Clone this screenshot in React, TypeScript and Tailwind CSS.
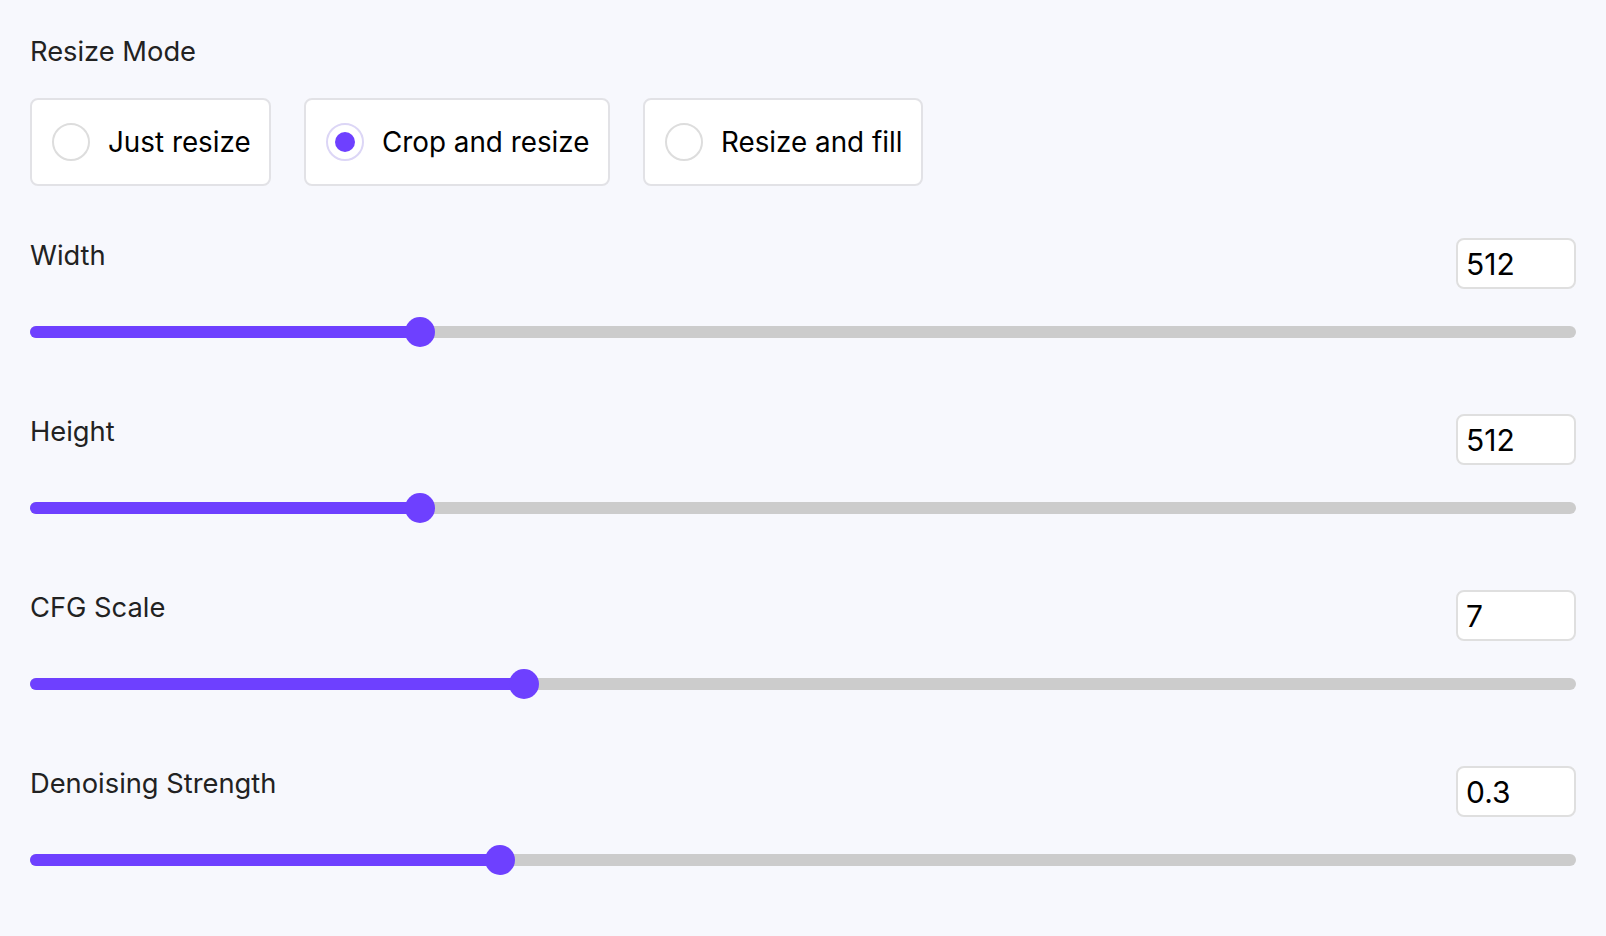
import React from "react";

function Radio({ selected }: { selected: boolean }) {
  return selected ? (
    <span className="flex h-[38px] w-[38px] shrink-0 items-center justify-center rounded-full border-2 border-[#dcd6f6] bg-white">
      <span className="h-[20px] w-[20px] rounded-full bg-[#6e40ff]" />
    </span>
  ) : (
    <span className="h-[38px] w-[38px] shrink-0 rounded-full border-2 border-[#dddddd] bg-white" />
  );
}

function Slider({ label, value, ratio }: { label: string; value: string; ratio: number }) {
  return (
    <div className="flex flex-col">
      <div className="flex items-start justify-between">
        <span className="mt-[2px] text-[27.3px] leading-[32px] text-[#222222]">{label}</span>
        <input
          readOnly
          value={value}
          className="h-[51px] w-[120px] rounded-[8px] border-2 border-[#dfdfdf] bg-white px-[8px] text-[30px] text-black outline-none"
          style={{ fontFamily: "Inter, 'Noto Sans', sans-serif" }}
        />
      </div>
      <div className="relative mt-[28px] flex h-[30px] items-center">
        <div className="h-[12px] w-full rounded-full bg-[#cccccc]" />
        <div
          className="absolute left-0 top-[9px] h-[12px] rounded-l-full bg-[#6e40ff]"
          style={{ width: `calc(15px + (100% - 30px) * ${ratio})` }}
        />
        <div
          className="absolute top-0 h-[30px] w-[30px] rounded-full bg-[#6e40ff]"
          style={{ left: `calc((100% - 30px) * ${ratio})` }}
        />
      </div>
    </div>
  );
}

export default function App() {
  const modes = [
    { label: "Just resize", selected: false, w: "w-[241px]" },
    { label: "Crop and resize", selected: true, w: "w-[306px]" },
    { label: "Resize and fill", selected: false, w: "w-[280px]" },
  ];
  const sliders = [
    { label: "Width", value: "512", ratio: 0.2474 },
    { label: "Height", value: "512", ratio: 0.2474 },
    { label: "CFG Scale", value: "7", ratio: 6 / 19 },
    { label: "Denoising Strength", value: "0.3", ratio: 0.3 },
  ];
  return (
    <div
      className="min-h-screen bg-[#f7f8fd] px-[30px] pt-[36px]"
      style={{ fontFamily: "Inter, 'Noto Sans', sans-serif" }}
    >
      <div className="text-[27.3px] leading-[32px] text-[#222222]">Resize Mode</div>
      <div className="mt-[30px] flex gap-[33px]">
        {modes.map((m) => (
          <div
            key={m.label}
            className={`flex h-[88px] ${m.w} items-center gap-[18px] rounded-[8px] border-2 border-[#e2e2e6] bg-white px-[20px]`}
          >
            <Radio selected={m.selected} />
            <span className="mt-[2px] whitespace-nowrap text-[27.8px] leading-none text-black">{m.label}</span>
          </div>
        ))}
      </div>
      <div className="mt-[52px] flex flex-col gap-[67px]">
        {sliders.map((s) => (
          <Slider key={s.label} label={s.label} value={s.value} ratio={s.ratio} />
        ))}
      </div>
    </div>
  );
}
